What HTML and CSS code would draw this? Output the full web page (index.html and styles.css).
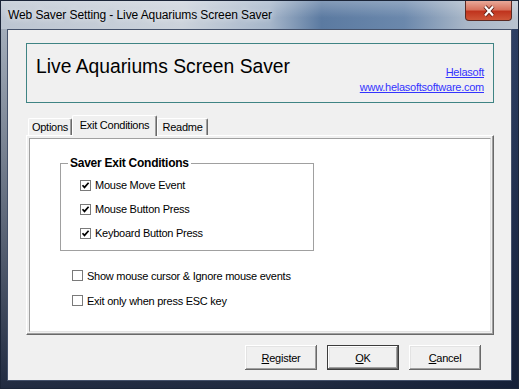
FILE: index.html
```html
<!DOCTYPE html>
<html>
<head>
<meta charset="utf-8">
<title>Web Saver Setting - Live Aquariums Screen Saver</title>
<link rel="stylesheet" href="styles.css">
</head>
<body>
<div class="window">
  <div class="titlebar">
    <span class="caption">Web Saver Setting - Live Aquariums Screen Saver</span>
    <span class="close-btn">
      <svg width="16" height="12" viewBox="0 0 16 12">
        <path d="M4 1.5 L12 10.5 M12 1.5 L4 10.5" stroke="#5a1b12" stroke-width="4" fill="none"/>
        <path d="M4 1.5 L12 10.5 M12 1.5 L4 10.5" stroke="#fff" stroke-width="2.2" fill="none"/>
      </svg>
    </span>
  </div>
  <div class="client">
    <div class="header">
      <div class="app-title">Live Aquariums Screen Saver</div>
      <div class="links">
        <a href="javascript:">Helasoft</a>
        <a href="javascript:">www.helasoftsoftware.com</a>
      </div>
    </div>
    <div class="tabs">
      <div class="tab tab-options">Options</div>
      <div class="tab tab-exit active">Exit Conditions</div>
      <div class="tab tab-readme">Readme</div>
    </div>
    <div class="panel">
      <div class="page">
        <fieldset class="group">
          <legend>Saver Exit Conditions</legend>
          <div class="check">
            <span class="box"><svg width="9" height="9" viewBox="0 0 9 9"><path d="M1.5 4.2 L3.5 6.4 L7.6 1.8" stroke="#000" stroke-width="1.7" fill="none"/></svg></span>
            Mouse Move Event
          </div>
          <div class="check">
            <span class="box"><svg width="9" height="9" viewBox="0 0 9 9"><path d="M1.5 4.2 L3.5 6.4 L7.6 1.8" stroke="#000" stroke-width="1.7" fill="none"/></svg></span>
            Mouse Button Press
          </div>
          <div class="check">
            <span class="box"><svg width="9" height="9" viewBox="0 0 9 9"><path d="M1.5 4.2 L3.5 6.4 L7.6 1.8" stroke="#000" stroke-width="1.7" fill="none"/></svg></span>
            Keyboard Button Press
          </div>
        </fieldset>
        <div class="options">
          <div class="check opt"><span class="box"></span>Show mouse cursor &amp; Ignore mouse events</div>
          <div class="check opt"><span class="box"></span>Exit only when press ESC key</div>
        </div>
      </div>
    </div>
    <div class="buttons">
      <span class="btn"><u>R</u>egister</span>
      <span class="btn default"><u>O</u>K</span>
      <span class="btn"><u>C</u>ancel</span>
    </div>
  </div>
</div>
</body>
</html>
```

FILE: styles.css
```css
body {
  margin: 0;
  background: #000;
  font-family: "Liberation Sans", Arial, sans-serif;
  font-size: 11px;
  letter-spacing: -0.25px;
  color: #000;
}

/* window frame */
.window {
  width: 519px;
  height: 389px;
  box-sizing: border-box;
  border: 1px solid #1b2538;
  padding: 0 6px 7px;
  display: flex;
  flex-direction: column;
  background:
    linear-gradient(to bottom, rgba(18, 28, 50, 0) 30px, rgba(18, 28, 50, 0.9) 389px),
    linear-gradient(to right, #a3adba 0, #98a6b8 55%, #2c3e62 100%);
}
.titlebar {
  height: 28px;
  margin: 0 -6px;
  padding-left: 7px;
  display: flex;
  justify-content: space-between;
  align-items: flex-start;
  background:
    linear-gradient(to bottom, rgba(255, 255, 255, 0.25), rgba(255, 255, 255, 0) 60%),
    linear-gradient(to right, #bcc5d1 0, #ccd3dc 35%, #a6b6ca 52%, #5b7aa1 62%, #6b88ac 78%, #a9b7c8 90%, #b9c3cf 100%);
}
.caption {
  font-size: 12px;
  letter-spacing: -0.1px;
  line-height: 28px;
  text-shadow: 0 0 6px rgba(255, 255, 255, 0.9);
}
.close-btn {
  width: 45px;
  height: 19px;
  margin-right: 6px;
  border: 1px solid #5b2a23;
  border-top: none;
  border-radius: 0 0 4px 4px;
  display: flex;
  align-items: center;
  justify-content: center;
  background: linear-gradient(to bottom, #e9a999 0, #d8735e 45%, #c0341e 55%, #cf5638 100%);
}

.client {
  flex: 1;
  border: 1px solid #44516a;
  background: #f0f0f0;
  display: flex;
  flex-direction: column;
}

/* header box */
.header {
  height: 60px;
  box-sizing: border-box;
  margin: 13px 17px 0 18px;
  padding: 0 9px;
  border: 1px solid #3f8484;
  display: flex;
  justify-content: space-between;
}
.app-title {
  font-size: 19.3px;
  letter-spacing: 0;
  line-height: 24px;
  padding-top: 11px;
}
.links {
  display: flex;
  flex-direction: column;
  align-items: flex-end;
  padding-top: 21px;
  line-height: 15px;
}
.links a {
  color: #3333ff;
}

/* tabs */
.tabs {
  height: 20px;
  margin: 12px 0 0 20px;
  display: flex;
  align-items: flex-end;
  position: relative;
  z-index: 1;
}
.tab {
  height: 17px;
  box-sizing: border-box;
  border: 1px solid;
  border-color: #fff #696969 transparent #fff;
  border-bottom: none;
  border-radius: 2px 2px 0 0;
  box-shadow: inset -1px 0 #a0a0a0;
  text-align: center;
  line-height: 16px;
}
.tab-options { width: 44px; }
.tab-exit { width: 85px; }
.tab-readme { width: 51px; }
.tab.active {
  height: 21px;
  margin-bottom: -1px;
  background: #f0f0f0;
  line-height: 18px;
}

.panel {
  height: 200px;
  box-sizing: border-box;
  margin: 0 17px 0 18px;
  padding: 2px;
  border: 1px solid;
  border-color: #fff #696969 #696969 #fff;
  box-shadow: inset -1px -1px #a0a0a0;
}
.page {
  height: 100%;
  box-sizing: border-box;
  padding: 17px 0 0 30px;
  background: #fff;
  border: 1px solid;
  border-color: #a0a0a0 #e3e3e3 #e3e3e3 #a0a0a0;
}

.group {
  width: 254px;
  box-sizing: border-box;
  margin: 0;
  padding: 3px 0 5px 19px;
  border: 1px solid #a0a0a0;
}
.group legend {
  margin-left: -12px;
  padding: 0 2px;
  font-weight: bold;
  font-size: 12px;
  line-height: 14px;
}
.check {
  height: 24px;
  display: flex;
  align-items: center;
  gap: 4px;
}
.box {
  width: 11px;
  height: 11px;
  box-sizing: border-box;
  border: 1px solid #7a7a7a;
  background: #fff;
  display: flex;
  align-items: center;
  justify-content: center;
}
.options {
  margin: 12px 0 0 12px;
}
.opt {
  height: 25px;
}

/* dialog buttons */
.buttons {
  margin: 10px 30px 0 0;
  display: flex;
  justify-content: flex-end;
  gap: 10px;
}
.btn {
  width: 72px;
  height: 25px;
  box-sizing: border-box;
  display: flex;
  align-items: center;
  justify-content: center;
  background: #f0f0f0;
  box-shadow: inset -1px -1px #696969, inset 1px 1px #fff, inset -2px -2px #a0a0a0, inset 2px 2px #e3e3e3;
}
.btn.default {
  border: 1px solid #3c3c3c;
}
```
